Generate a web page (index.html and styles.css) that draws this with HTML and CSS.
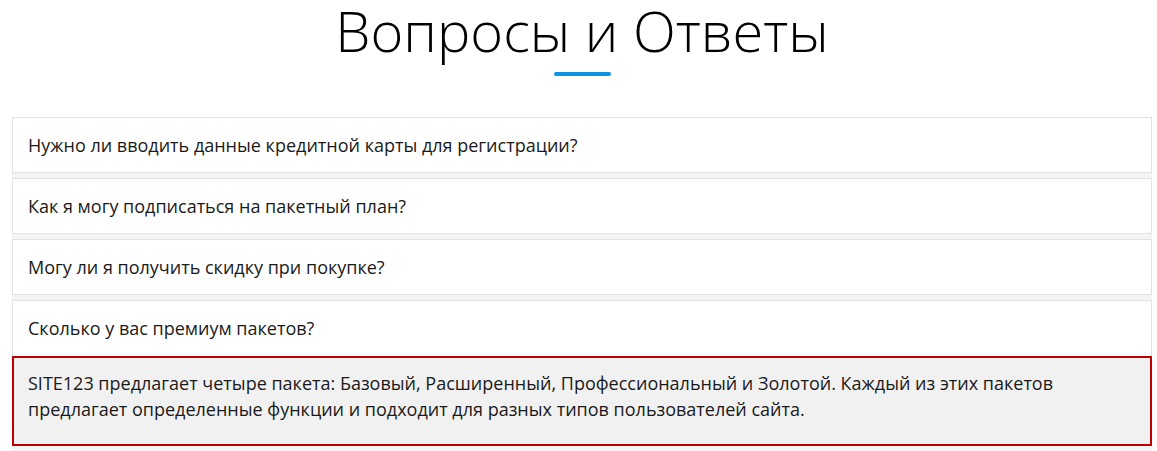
FILE: index.html
```html
<!DOCTYPE html>
<html lang="ru">
<head>
    <meta charset="UTF-8">
    <meta name="viewport" content="width=device-width, initial-scale=1.0">
    <title>Вопросы и Ответы</title>
    <link rel="stylesheet" href="styles.css">
</head>
<body>
    <div class="faq">
        <div class="faq-head">
            <h1>Вопросы и Ответы</h1>
            <div class="line"></div>
        </div>

        <div class="faq-list">
            <div class="item">
                <div class="question">Нужно ли вводить данные кредитной карты для регистрации?</div>
            </div>
            <div class="item">
                <div class="question">Как я могу подписаться на пакетный план?</div>
            </div>
            <div class="item">
                <div class="question">Могу ли я получить скидку при покупке?</div>
            </div>
            <div class="item open">
                <div class="question">Сколько у вас премиум пакетов?</div>
                <div class="answer">
                    <p>SITE123 предлагает четыре пакета: Базовый, Расширенный, Профессиональный и Золотой. Каждый из этих пакетов предлагает определенные функции и подходит для разных типов пользователей сайта.</p>
                </div>
            </div>
        </div>
    </div>
</body>
</html>
```

FILE: styles.css
```css
body {
    margin: 0;
    background-color: #fff;
    color: #1a1a1a;
    font-family: 'Open Sans', 'Noto Sans', sans-serif;
}

.faq {
    max-width: 1140px;
    margin: 0 5px 0 12px;
}

.faq-head {
    text-align: center;
}

.faq-head h1 {
    margin: 0;
    font-size: 56px;
    font-weight: 300;
    line-height: 1.1;
    color: #000;
}

.line {
    width: 57px;
    height: 4px;
    margin: 10px auto 0;
    border-radius: 2px;
    background-color: #0a93e4;
}

.faq-list {
    margin-top: 41px;
}

.item {
    border-bottom: 5px solid #f4f4f5;
}

.question {
    padding: 15px;
    font-size: 18px;
    line-height: 24px;
    background-color: #fff;
    border: 1px solid #e1e2e7;
}

.item.open .question {
    border-bottom: none;
    padding-bottom: 16px;
}

.answer {
    background-color: #f1f1f1;
    border: 2px solid #c00000;
    padding: 12px 14px 22px;
}

.answer p {
    margin: 0;
    font-size: 18px;
    line-height: 26px;
}
```
